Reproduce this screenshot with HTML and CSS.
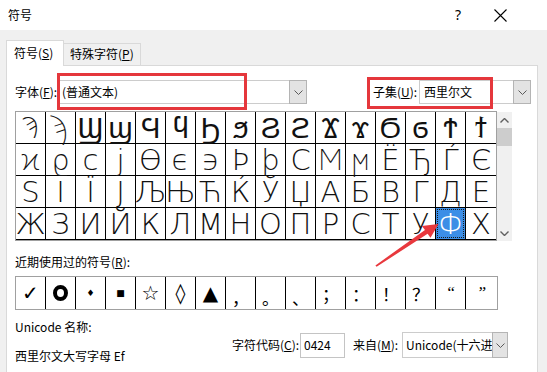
FILE: index.html
```html
<!DOCTYPE html>
<html lang="zh-CN">
<head>
<meta charset="utf-8">
<title>符号</title>
<link rel="stylesheet" href="styles.css">
</head>
<body>
<div class="win">
  <div class="titlebar">
    <span class="title">符号</span>
    <span class="help">?</span>
    <span class="close"><svg width="13" height="13" viewBox="0 0 13 13"><path d="M0.5 0.5 L12.5 12.5 M12.5 0.5 L0.5 12.5" stroke="#000" stroke-width="1.1" fill="none"/></svg></span>
  </div>
  <div class="body">
    <div class="tabs">
      <div class="tab active">符号(<u>S</u>)</div>
      <div class="tab">特殊字符(<u>P</u>)</div>
    </div>
    <div class="panel">
      <div class="fontrow">
        <span class="lbl lbl-font">字体(<u>F</u>):</span>
        <div class="combo combo-font"><span class="val">(普通文本)</span><span class="btn"><svg width="9" height="5" viewBox="0 0 9 5"><path d="M0.5 0.5 L4.5 4.5 L8.5 0.5" fill="none" stroke="#5a5a5a"/></svg></span></div>
        <span class="lbl lbl-subset">子集(<u>U</u>):</span>
        <div class="combo combo-subset"><span class="val">西里尔文</span><span class="btn"><svg width="9" height="5" viewBox="0 0 9 5"><path d="M0.5 0.5 L4.5 4.5 L8.5 0.5" fill="none" stroke="#5a5a5a"/></svg></span></div>
      </div>
      <div class="gridwrap">
        <div class="grid">
          <span class="c">Ϡ</span><span class="c">ϡ</span><span class="c">Ϣ</span><span class="c">ϣ</span><span class="c">Ϥ</span><span class="c">ϥ</span><span class="c">Ϧ</span><span class="c">ϧ</span><span class="c">Ϩ</span><span class="c">ϩ</span><span class="c">Ϫ</span><span class="c">ϫ</span><span class="c">Ϭ</span><span class="c">ϭ</span><span class="c">Ϯ</span><span class="c">ϯ</span>
          <span class="c">ϰ</span><span class="c">ϱ</span><span class="c">ϲ</span><span class="c">ϳ</span><span class="c">ϴ</span><span class="c">ϵ</span><span class="c">϶</span><span class="c">Ϸ</span><span class="c">ϸ</span><span class="c">Ϲ</span><span class="c">Ϻ</span><span class="c">ϻ</span><span class="c">Ё</span><span class="c">Ђ</span><span class="c">Ѓ</span><span class="c">Є</span>
          <span class="c">Ѕ</span><span class="c">І</span><span class="c">Ї</span><span class="c">Ј</span><span class="c">Љ</span><span class="c">Њ</span><span class="c">Ћ</span><span class="c">Ќ</span><span class="c">Ў</span><span class="c">Џ</span><span class="c">А</span><span class="c">Б</span><span class="c">В</span><span class="c">Г</span><span class="c">Д</span><span class="c">Е</span>
          <span class="c">Ж</span><span class="c">З</span><span class="c">И</span><span class="c">Й</span><span class="c">К</span><span class="c">Л</span><span class="c">М</span><span class="c">Н</span><span class="c">О</span><span class="c">П</span><span class="c">Р</span><span class="c">С</span><span class="c">Т</span><span class="c">У</span><span class="c sel"><span class="focus">Ф</span></span><span class="c">Х</span>
        </div>
        <div class="scroll">
          <span class="arr"><svg width="9" height="5" viewBox="0 0 9 5"><path d="M0.5 4.5 L4.5 0.5 L8.5 4.5" fill="none" stroke="#606060" stroke-width="1.4"/></svg></span>
          <span class="thumb"></span>
          <span class="track"></span>
          <span class="arr"><svg width="9" height="5" viewBox="0 0 9 5"><path d="M0.5 0.5 L4.5 4.5 L8.5 0.5" fill="none" stroke="#606060" stroke-width="1.4"/></svg></span>
        </div>
      </div>
      <div class="recent-lbl">近期使用过的符号(<u>R</u>):</div>
      <div class="recent">
        <span class="r r-check">✓</span>
        <span class="r"><span class="ring"></span></span>
        <span class="r r-sm">♦</span>
        <span class="r r-sm">■</span>
        <span class="r r-star">☆</span>
        <span class="r r-loz">◊</span>
        <span class="r r-tri">▲</span>
        <span class="r r-cjk r-low">，</span>
        <span class="r r-cjk r-low">。</span>
        <span class="r r-cjk r-low">、</span>
        <span class="r r-cjk">；</span>
        <span class="r r-cjk">：</span>
        <span class="r r-cjk">！</span>
        <span class="r r-cjk">？</span>
        <span class="r r-q">“</span>
        <span class="r r-q">”</span>
      </div>
      <div class="bottom">
        <div class="name">
          <div class="name-lbl">Unicode 名称:</div>
          <div class="name-val">西里尔文大写字母 Ef</div>
        </div>
        <div class="code">
          <span class="lbl lbl-code">字符代码(<u>C</u>):</span>
          <span class="input">0424</span>
          <span class="lbl lbl-from">来自(<u>M</u>):</span>
          <div class="combo combo-from"><span class="val">Unicode(十六进制)</span><span class="btn"><svg width="9" height="5" viewBox="0 0 9 5"><path d="M0.5 0.5 L4.5 4.5 L8.5 0.5" fill="none" stroke="#5a5a5a"/></svg></span></div>
        </div>
      </div>
    </div>
  </div>
  <svg class="annot" width="547" height="372" viewBox="0 0 547 372">
    <rect x="58.5" y="74.5" width="187" height="34" fill="none" stroke="#e5373c" stroke-width="3"/>
    <rect x="368.5" y="78.5" width="123" height="29" fill="none" stroke="#e5373c" stroke-width="3"/>
    <polygon points="375.4,265.4 425.0,230.0 421.8,226.0 438.5,224 430.5,237.8 427.6,233.8 376.6,266.8" fill="#e8383d"/>
  </svg>
</div>
</body>
</html>
```
FILE: styles.css
```css
* { box-sizing: border-box; margin: 0; padding: 0; }
html, body { width: 547px; height: 372px; overflow: hidden; background: #f0f0f0; }
body {
  font-family: "Noto Sans CJK SC", "Noto Sans", sans-serif;
  font-size: 12px;
  color: #000;
}
.win { position: relative; width: 547px; height: 372px; }
u { text-decoration: underline; text-underline-offset: 1px; }

.titlebar {
  height: 30px;
  background: #fff;
  display: flex;
  align-items: center;
  padding-left: 8px;
}
.title { flex: 1; line-height: 16px; }
.help {
  font-family: "Noto Sans", sans-serif;
  font-size: 14px;
  line-height: 16px;
  margin-right: 33px;
}
.close { display: flex; margin-right: 40px; }

.body { padding: 10px 9px 0 6px; }
.tabs { display: flex; height: 25px; align-items: flex-start; }
.tab {
  border: 1px solid #d9d9d9;
  border-bottom: none;
  line-height: 16px;
}
.tab.active {
  position: relative;
  z-index: 1;
  background: #fff;
  width: 58px;
  height: 26px;
  padding: 4px 0 0 7px;
}
.tab:not(.active) {
  margin-top: 3px;
  width: 77px;
  height: 22px;
  border-left: none;
  padding: 2px 0 0 6px;
  background: #f0f0f0;
}

.panel {
  background: #fff;
  border: 1px solid #d9d9d9;
  width: 532px;
  height: 320px;
  padding-left: 8px;
}

.fontrow {
  margin-top: 14px;
  display: flex;
  align-items: center;
  height: 24px;
}
.lbl { line-height: 16px; white-space: nowrap; }
.lbl-font { width: 43px; }
.lbl-subset { width: 46px; margin-left: 66px; }
.combo {
  display: flex;
  align-items: stretch;
  height: 24px;
  border: 1px solid #cccccc;
  background: #fff;
}
.combo .val {
  flex: 1;
  line-height: 22px;
  white-space: nowrap;
  overflow: hidden;
}
.combo .btn {
  width: 18px;
  background: #e3e3e3;
  border: 1px solid #b4b4b4;
  margin: -1px -1px -1px 0;
  display: flex;
  align-items: center;
  justify-content: center;
}
.combo-font { width: 249px; }
.combo-font .val { padding-left: 3px; }
.combo-subset { width: 112px; }
.combo-subset .val { padding-left: 4px; }

.gridwrap { margin-top: 7px; display: flex; }
.grid {
  width: 482px;
  height: 130px;
  border: 1px solid #a0a0a0;
  display: grid;
  grid-template-columns: repeat(16, 30px);
  grid-template-rows: repeat(4, 32px);
}
.c {
  border-right: 1px solid #000;
  border-bottom: 1px solid #000;
  display: flex;
  align-items: center;
  justify-content: center;
  font-family: "DejaVu Sans", "Noto Sans", sans-serif;
  font-weight: 200;
  font-size: 29px;
  line-height: 26px;
  color: #111;
}
.c:nth-child(16n) { border-right: none; }
.c.sel { background: #3c8ee6; color: #fff; padding: 1px; }
.focus {
  width: 100%;
  height: 100%;
  border: 1px dotted #1a1a1a;
  display: flex;
  align-items: center;
  justify-content: center;
}

.scroll {
  width: 15px;
  height: 129px;
  margin-top: 1px;
  background: #f0f0f0;
  display: flex;
  flex-direction: column;
}
.arr { height: 16px; display: flex; align-items: center; justify-content: center; }
.thumb { height: 18px; background: #cdcdcd; }
.track { flex: 1; }

.recent-lbl { margin-top: 13px; line-height: 16px; }
.recent {
  margin-top: 6px;
  width: 483px;
  height: 34px;
  border: 1px solid #a0a0a0;
  display: flex;
}
.r {
  width: 30px;
  border-right: 1px solid #000;
  display: flex;
  align-items: center;
  justify-content: center;
  font-family: "DejaVu Sans", sans-serif;
  line-height: 1;
}
.r:last-child { border-right: none; width: 31px; }
.r-check { font-size: 20px; font-weight: bold; }
.ring {
  width: 15px;
  height: 16px;
  border: 4.5px solid #000;
  border-radius: 50%;
}
.r-sm { font-size: 9px; }
.r-star { font-size: 20px; }
.r-loz { font-size: 20px; }
.r-tri { font-size: 20px; }
.r-cjk { font-family: "Noto Sans CJK SC", sans-serif; font-size: 17px; }
.r-low { align-items: flex-end; padding-bottom: 3px; }
.r-q { font-family: "Liberation Serif", serif; font-style: italic; font-size: 17px; align-items: flex-start; padding-top: 7px; }

.bottom { margin-top: 9px; display: flex; }
.name { width: 217px; }
.name-lbl { line-height: 16px; }
.name-val { margin-top: 13px; line-height: 16px; }
.code { margin-top: 13px; display: flex; align-items: center; height: 26px; }
.lbl-code { width: 68px; }
.input {
  width: 45px;
  height: 25px;
  border: 1px solid #c4c4c4;
  padding-left: 3px;
  line-height: 22px;
}
.lbl-from { margin-left: 8px; width: 49px; }
.combo-from { width: 106px; height: 26px; }
.combo-from .val { padding-left: 3px; line-height: 24px; }
.combo-from .btn { width: 16px; }

.annot { position: absolute; left: 0; top: 0; pointer-events: none; }
```
